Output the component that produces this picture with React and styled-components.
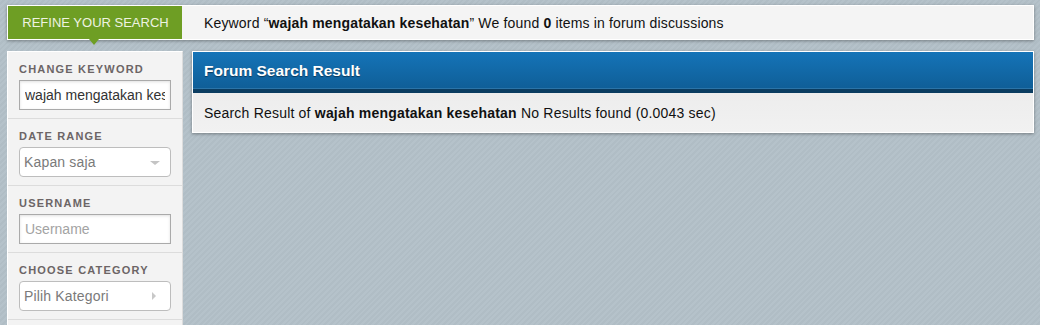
import React from "react";
import styled, { createGlobalStyle } from "styled-components";

const Global = createGlobalStyle`
  html, body { margin: 0; padding: 0; }
  body {
    font-family: "Liberation Sans", Arial, sans-serif;
    background-color: #b3c0c8;
    background-image: repeating-linear-gradient(135deg, #b5c2ca 0px, #b5c2ca 2px, #b0bdc5 2px, #b0bdc5 4px);
    height: 325px;
    overflow: hidden;
  }
`;

const Page = styled.div`
  padding: 5px 6px 0 7px;
`;

const TopBar = styled.div`
  display: flex;
  height: 35px;
  box-sizing: border-box;
  border: 1px solid #fff;
  background: #f4f4f4;
  box-shadow: 0 1px 3px rgba(0, 0, 0, 0.35);
`;

const RefineTab = styled.div`
  position: relative;
  width: 174px;
  flex: none;
  background: #6e9e24;
  color: #eef3e2;
  font-size: 13px;
  padding-left: 1px;
  box-sizing: border-box;
  display: flex;
  align-items: center;
  justify-content: center;
  &::after {
    content: "";
    position: absolute;
    left: 81px;
    bottom: -6px;
    border-left: 5px solid transparent;
    border-right: 5px solid transparent;
    border-top: 6px solid #6e9e24;
  }
`;

const Summary = styled.div`
  padding-left: 22px;
  display: flex;
  align-items: center;
  font-size: 14px;
  letter-spacing: 0.16px;
  color: #111;
  white-space: pre;
`;

const Content = styled.div`
  display: flex;
  align-items: flex-start;
  gap: 9px;
  margin-top: 11px;
`;

const Sidebar = styled.div`
  width: 176px;
  flex: none;
  box-sizing: border-box;
  min-height: 300px;
  background: #f3f3f3;
  border-left: 1px solid #fff;
  border-right: 1px solid #dcdcdc;
  border-top: 1px solid #fff;
`;

const Section = styled.div`
  padding: 10px 11px 8px 11px;
  border-bottom: 1px solid #dcdcdc;
`;

const Label = styled.div`
  font-size: 11px;
  line-height: 14px;
  font-weight: bold;
  letter-spacing: 1.2px;
  color: #6c6566;
  text-transform: uppercase;
  margin-bottom: 4px;
`;

const TextInput = styled.input`
  display: block;
  width: 152px;
  height: 30px;
  box-sizing: border-box;
  margin: 0;
  padding: 0 5px;
  border: 1px solid #aaa;
  background: #fff;
  box-shadow: inset 0 1px 3px rgba(0, 0, 0, 0.12);
  font-family: "Liberation Sans", Arial, sans-serif;
  font-size: 14px;
  color: #333;
  outline: none;
  &::placeholder {
    color: #a3a3a3;
  }
`;

const SelectBox = styled.div`
  width: 152px;
  height: 30px;
  box-sizing: border-box;
  border: 1px solid #bdbdbd;
  border-radius: 4px;
  background: #fff;
  display: flex;
  align-items: center;
  justify-content: space-between;
  padding: 0 ${(p) => (p.$arrow === "right" ? "14px" : "10px")} 0 4px;
  font-size: 14px;
  letter-spacing: 0.16px;
  color: #7a7a7a;
`;

const Arrow = styled.span`
  width: 0;
  height: 0;
  ${(p) =>
    p.$dir === "right"
      ? `border-top: 4px solid transparent; border-bottom: 4px solid transparent; border-left: 4px solid #c8c8c8;`
      : `border-left: 5px solid transparent; border-right: 5px solid transparent; border-top: 4px solid #c4c4c4; margin-top: 2px;`}
`;

const Main = styled.div`
  flex: 1;
  border: 1px solid #fff;
  box-shadow: 0 1px 3px rgba(0, 0, 0, 0.35);
`;

const PanelHeader = styled.div`
  height: 37px;
  padding-left: 11px;
  display: flex;
  align-items: center;
  background: linear-gradient(#1574b8, #0f5e97);
  border-bottom: 4px solid #0b3d61;
  box-shadow: inset 0 -1px 0 #2b74a8;
  color: #fff;
  font-size: 15.5px;
  font-weight: bold;
  text-shadow: 0 1px 1px rgba(0, 0, 0, 0.45);
`;

const PanelBody = styled.div`
  height: 39px;
  padding-left: 11px;
  display: flex;
  align-items: center;
  background: linear-gradient(#ededed, #f1f1f1);
  font-size: 14px;
  letter-spacing: 0.2px;
  color: #111;
  white-space: pre;
`;

export default function App() {
  return (
    <>
      <Global />
      <Page>
        <TopBar>
          <RefineTab>REFINE YOUR SEARCH</RefineTab>
          <Summary>
            Keyword “<b>wajah mengatakan kesehatan</b>” We found <b>0</b> items in forum discussions
          </Summary>
        </TopBar>
        <Content>
          <Sidebar>
            <Section>
              <Label>Change Keyword</Label>
              <TextInput readOnly value="wajah mengatakan kesehatan" />
            </Section>
            <Section>
              <Label>Date Range</Label>
              <SelectBox>
                Kapan saja
                <Arrow $dir="down" />
              </SelectBox>
            </Section>
            <Section>
              <Label>Username</Label>
              <TextInput placeholder="Username" />
            </Section>
            <Section>
              <Label>Choose Category</Label>
              <SelectBox $arrow="right">
                Pilih Kategori
                <Arrow $dir="right" />
              </SelectBox>
            </Section>
          </Sidebar>
          <Main>
            <PanelHeader>Forum Search Result</PanelHeader>
            <PanelBody>
              Search Result of <b>wajah mengatakan kesehatan</b> No Results found (0.0043 sec)
            </PanelBody>
          </Main>
        </Content>
      </Page>
    </>
  );
}
